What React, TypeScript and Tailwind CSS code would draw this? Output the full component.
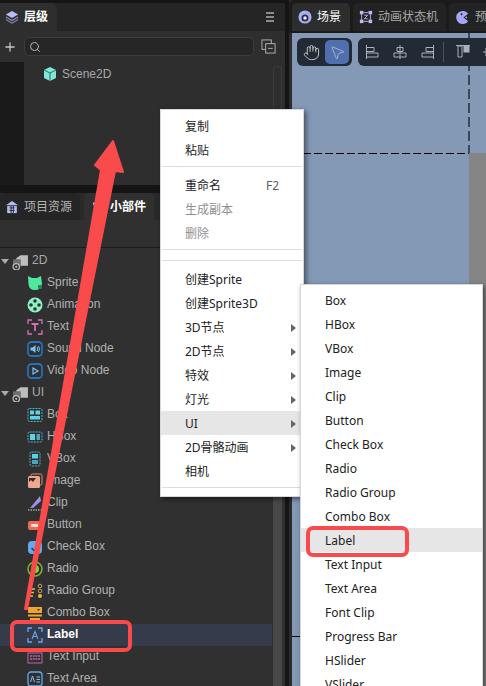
import type { FC, ReactNode } from 'react'
import { Hand, MousePointer2, Plus, Search } from 'lucide-react'

const Svg: FC<{ children: ReactNode; className?: string }> = ({ children, className }) => (
  <svg viewBox="0 0 16 16" className={className ?? 'h-4 w-4 shrink-0'} fill="none">
    {children}
  </svg>
)

const Folder = () => (
  <Svg className="h-[17px] w-[17px] shrink-0">
    <path d="M4 5 L8 2 H15 V12 H8 V6 H4 Z" fill="#bdbdbd" />
    <path d="M1 6 H8 V13 H1 Z" fill="#8a8a8a" opacity="0.7" />
    <circle cx="4" cy="13" r="3" fill="#303030" stroke="#bdbdbd" strokeWidth="1.2" />
    <circle cx="4" cy="13" r="1" fill="#bdbdbd" />
  </Svg>
)

const icons: Record<string, ReactNode> = {
  Sprite: (
    <Svg>
      <path d="M1 1 L5 3 H10 L14 1 L15 9 Q14 15 8 15 Q2 15 1.500 9 Z" fill="#4ee89f" />
      <rect x="11" y="10" width="4" height="4" rx="1" fill="#2e7d5b" />
    </Svg>
  ),
  Animation: (
    <Svg>
      <circle cx="8" cy="8" r="7.500" fill="#8ef2c6" />
      <circle cx="8" cy="4" r="1.800" fill="#303030" />
      <circle cx="8" cy="12" r="1.800" fill="#303030" />
      <circle cx="4" cy="8" r="1.800" fill="#303030" />
      <circle cx="12" cy="8" r="1.800" fill="#303030" />
    </Svg>
  ),
  Text: (
    <Svg>
      <path d="M1 5 V1 H5 M11 1 H15 V5 M15 11 V15 H11 M5 15 H1 V11" stroke="#d56fb4" strokeWidth="1.300" />
      <path d="M4.500 5 H11.500 M8 5 V12" stroke="#d56fb4" strokeWidth="1.800" />
    </Svg>
  ),
  'Sound Node': (
    <Svg>
      <rect x="1" y="1" width="14" height="14" rx="3.500" stroke="#1e88f0" strokeWidth="1.300" />
      <path d="M3.500 6.500 H5.500 L8.500 4 V12 L5.500 9.500 H3.500 Z" fill="#7cc0f5" />
      <path d="M10 6 Q11.500 8 10 10 M11.500 5 Q13.500 8 11.500 11" stroke="#7cc0f5" />
    </Svg>
  ),
  'Video Node': (
    <Svg>
      <rect x="1" y="1" width="14" height="14" rx="3.500" stroke="#1e88f0" strokeWidth="1.300" />
      <path d="M6 5 L11 8 L6 11 Z" stroke="#7cc0f5" strokeWidth="1.200" />
    </Svg>
  ),
  Box: (
    <Svg>
      <rect x="1" y="1.500" width="14" height="13" rx="1.500" stroke="#4fb6c8" strokeDasharray="2 1" />
      <rect x="3" y="3.500" width="4" height="4" fill="#5ed2e8" />
      <rect x="8.500" y="3.500" width="4.500" height="4" fill="#5ed2e8" />
      <rect x="3" y="9" width="10" height="3.500" fill="#5ed2e8" />
    </Svg>
  ),
  HBox: (
    <Svg>
      <rect x="1" y="3" width="14" height="10" rx="1.500" stroke="#4fb6c8" strokeDasharray="2 1" />
      <rect x="3" y="5" width="5" height="6" fill="#5ed2e8" />
      <rect x="9.500" y="5" width="3.500" height="6" fill="#4fa3b8" />
    </Svg>
  ),
  VBox: (
    <Svg>
      <rect x="3" y="1" width="10" height="14" rx="1.500" stroke="#4fb6c8" strokeDasharray="2 1" />
      <rect x="5" y="3" width="6" height="4.500" fill="#5ed2e8" />
      <rect x="5" y="9" width="6" height="4" fill="#4fa3b8" />
    </Svg>
  ),
  Image: (
    <Svg>
      <rect x="4" y="1" width="11" height="11" rx="1.500" stroke="#d9937c" />
      <rect x="1" y="3" width="12" height="12" rx="1.500" fill="#eda68f" />
      <path d="M2 5 H9 L6 9 L4 7 L2 9 Z" fill="#3a2a26" />
    </Svg>
  ),
  Clip: (
    <Svg>
      <path d="M3 13 L13 1 L14 6 L6 13 Z" fill="#a08ee8" />
      <path d="M1 15 H15" stroke="#d8d8d8" strokeDasharray="1.500 1" />
    </Svg>
  ),
  Button: (
    <Svg>
      <rect x="1" y="4" width="15" height="9" rx="2" fill="#ef6a52" />
      <rect x="4" y="7" width="7" height="3" fill="#ffd9cf" />
    </Svg>
  ),
  'Check Box': (
    <Svg>
      <rect x="1" y="2" width="14" height="13" rx="4" fill="#63a9f2" />
      <path d="M4.500 9 L7 11.500 L11 8" stroke="#1e3550" strokeWidth="1.300" />
    </Svg>
  ),
  Radio: (
    <Svg>
      <circle cx="8" cy="8" r="7" stroke="#79b82c" strokeWidth="1.500" />
      <circle cx="8" cy="8" r="4" fill="#8fd52d" />
    </Svg>
  ),
  'Radio Group': (
    <Svg>
      <path d="M1 6 H8 M1 9.500 H7 M1 13 H6" stroke="#eeb54f" strokeWidth="1.600" />
      <circle cx="13" cy="3" r="1.800" stroke="#c9a050" />
      <circle cx="13" cy="8" r="1.800" stroke="#c9a050" />
      <circle cx="13" cy="13" r="2" fill="#eeb54f" />
    </Svg>
  ),
  'Combo Box': (
    <Svg>
      <path d="M1 2 H15 V8 H1 Z" fill="#f0a52f" />
      <path d="M10 4 H13 L11.500 6 Z" fill="#332" />
      <path d="M1 10.500 H15 M3 14 H13" stroke="#f0a52f" strokeWidth="1.800" />
    </Svg>
  ),
  Label: (
    <Svg>
      <path d="M1 5 V1 H5 M11 1 H15 V5 M15 11 V15 H11 M5 15 H1 V11" stroke="#65a8ee" strokeWidth="1.300" />
      <path d="M5 12 L8 4.500 L11 12 M6.200 9.500 H9.800" stroke="#65a8ee" strokeWidth="1.100" />
    </Svg>
  ),
  'Text Input': (
    <Svg>
      <rect x="1" y="4" width="14" height="10" fill="none" stroke="#c065a8" />
      <path d="M3 7 H13 M3 10 H13" stroke="#c065a8" strokeWidth="1.400" strokeDasharray="2 0.700" />
    </Svg>
  ),
  'Text Area': (
    <Svg>
      <rect x="1" y="1" width="14" height="14" rx="3" stroke="#65a8ee" strokeWidth="1.300" />
      <path d="M3.500 11 L5.500 5 L7.500 11 M9.500 6 H13 M9.500 8.500 H13 M9.500 11 H13" stroke="#8cc0f2" />
    </Svg>
  ),
}

const tree = [
  { name: '2D', items: ['Sprite', 'Animation', 'Text', 'Sound Node', 'Video Node'] },
  {
    name: 'UI',
    items: ['Box', 'HBox', 'VBox', 'Image', 'Clip', 'Button', 'Check Box', 'Radio', 'Radio Group', 'Combo Box', 'Label', 'Text Input', 'Text Area'],
  },
]

const Group: FC<{ name: string; items: string[] }> = ({ name, items }) => (
  <>
    <div className="flex h-[22px] items-center">
      <span className="ml-[1px] h-0 w-0 border-x-[4px] border-t-[5px] border-x-transparent border-t-[#aaaaaa]" />
      <span className="ml-[3px]">
        <Folder />
      </span>
      <span className="mb-[2px] ml-[3px] text-[#aaaaaa]">{name}</span>
    </div>
    {items.map((item) => (
      <div
        key={item}
        className={`flex h-[22px] items-center pl-[27px] ${item === 'Label' ? 'w-[272px] bg-[#353b4b] font-bold text-white' : ''}`}
      >
        {icons[item]}
        <span className="mb-[2px] ml-[4px]">{item}</span>
      </div>
    ))}
  </>
)

type Row = { label?: string; sub?: boolean; off?: boolean; hint?: string; active?: boolean; line?: boolean }

const mainMenu: Row[] = [
  { label: '复制' },
  { label: '粘贴' },
  { line: true },
  { label: '重命名', hint: 'F2' },
  { label: '生成副本', off: true },
  { label: '删除', off: true },
  { line: true },
  { line: true },
  { label: '创建Sprite' },
  { label: '创建Sprite3D' },
  { label: '3D节点', sub: true },
  { label: '2D节点', sub: true },
  { label: '特效', sub: true },
  { label: '灯光', sub: true },
  { label: 'UI', sub: true, active: true },
  { label: '2D骨骼动画', sub: true },
  { label: '相机' },
  { line: true },
]

const uiMenu = ['Box', 'HBox', 'VBox', 'Image', 'Clip', 'Button', 'Check Box', 'Radio', 'Radio Group', 'Combo Box', 'Label', 'Text Input', 'Text Area', 'Font Clip', 'Progress Bar', 'HSlider', 'VSlider']

const MenuRow: FC<{ row: Row }> = ({ row }) =>
  row.line ? (
    <div className="px-[1px] pb-[6px] pt-[4px]">
      <div className="h-[1px] bg-[#dcdce0]" />
    </div>
  ) : (
    <div
      className={`flex h-[24px] items-center pl-[24px] pr-[7px] pt-[2px] ${row.active ? 'bg-[#e6e6e6]' : ''} ${row.off ? 'text-[#8f8f8f]' : 'text-[#222222]'}`}
    >
      <span className="flex-1">{row.label}</span>
      {row.hint && <span className="mr-[17px] text-[#555c66]">{row.hint}</span>}
      {row.sub && <span className="h-0 w-0 border-y-[4px] border-l-[5px] border-y-transparent border-l-[#666666]" />}
    </div>
  )

const SceneTab: FC<{ active?: boolean; icon: ReactNode; label: string; className: string }> = ({ active, icon, label, className }) => (
  <div className={`flex h-[28px] shrink-0 items-center gap-[5px] rounded-t-[5px] pl-[6px] ${active ? 'bg-[#2d2d2d] text-white' : 'bg-[#232323] text-[#aaaaaa]'} ${className}`}>
    {icon}
    <span className="whitespace-nowrap">{label}</span>
  </div>
)

const AlignIcon: FC<{ children: ReactNode }> = ({ children }) => (
  <svg viewBox="0 0 16 16" className="h-[16px] w-[16px] shrink-0" fill="none" stroke="#a9b0ba" strokeWidth="1">
    {children}
  </svg>
)

export default function App() {
  return (
    <div
      className="relative flex h-[686px] w-[486px] overflow-hidden bg-[#151515] text-[12px]"
      style={{ fontFamily: '"Liberation Sans", "Noto Sans CJK SC", sans-serif' }}
    >
      {/* left column */}
      <div className="flex w-[289px] shrink-0 flex-col pr-[4px]">
        <div className="mt-[3px] flex h-[182px] flex-col rounded-tr-[5px] bg-[#2e2e2e]">
          <div className="flex h-[28px] items-center bg-[#252525] pr-[11px]">
            <div className="flex h-full w-[57px] items-center gap-[5px] rounded-tr-[5px] bg-[#2e2e2e] pl-[5px] font-bold text-white">
              <Svg className="h-[14px] w-[14px]">
                <path d="M8 1 L15 5 L8 9 L1 5 Z" fill="#b9bcf5" />
                <path d="M1 8 L8 12 L15 8 M1 11 L8 15 L15 11" stroke="#8d90c0" strokeWidth="1.300" />
              </Svg>
              层级
            </div>
            <div className="ml-auto flex w-[8px] flex-col gap-[2px]">
              <span className="h-[2px] bg-[#8a8a8a]" />
              <span className="h-[2px] bg-[#8a8a8a]" />
              <span className="h-[2px] bg-[#8a8a8a]" />
            </div>
          </div>
          <div className="flex h-[31px] items-center pl-[3px] pr-[9px]">
            <Plus className="h-[14px] w-[14px] text-[#c8c8c8]" strokeWidth={2.2} />
            <div className="ml-[7px] flex h-[19px] w-[230px] items-center rounded-[5px] border border-[#3c3c3c] bg-[#262626] pl-[4px]">
              <Search className="h-[12px] w-[12px] text-[#b5b5b5]" />
            </div>
            <Svg className="ml-auto h-[15px] w-[15px]">
              <rect x="1" y="1" width="10" height="10" stroke="#b5b5b5" />
              <rect x="5" y="5" width="10" height="10" fill="#2e2e2e" stroke="#b5b5b5" />
              <path d="M7.500 10 H12.500" stroke="#b5b5b5" />
            </Svg>
          </div>
          <div className="flex min-h-0 flex-1">
            <div className="w-[24px] bg-[#1a1a1a]" />
            <div className="flex h-[22px] flex-1 items-center pl-[18px] pt-[1px] text-[#a8a8a8]">
              <Svg className="h-[16px] w-[16px]">
                <path d="M8 1 L14 4 V12 L8 15 L2 12 V4 Z" fill="#7fe8d8" />
                <path d="M2 4 L8 7 L14 4 M8 7 V15" stroke="#2c6f66" />
              </Svg>
              <span className="ml-[4px]">Scene2D</span>
            </div>
            <div className="mr-[3px] mt-[4px] w-[9px] rounded-t-[5px] border border-b-0 border-[#3d3d3d]" />
          </div>
        </div>

        <div className="mt-[8px] flex min-h-0 flex-1 flex-col rounded-t-[5px] bg-[#303030]">
          <div className="flex h-[27px] gap-[4px] bg-[#2a2a2a] text-[#b5b5b5]">
            <div className="flex w-[80px] items-center gap-[5px] rounded-t-[5px] bg-[#252525] pl-[5px]">
              <Svg className="h-[14px] w-[14px]">
                <path d="M8 1 L15 6 H1 Z" fill="#b9bcf5" />
                <rect x="2.500" y="7" width="11" height="8" fill="#b9bcf5" />
                <path d="M5 9 H11 M5 12 H11 M7 7 V15 M9.500 7 V15" stroke="#252525" />
              </Svg>
              项目资源
            </div>
            <div className="flex w-[70px] items-center gap-[5px] rounded-t-[5px] bg-[#303030] pl-[7px] font-bold text-white">
              <Svg className="h-[14px] w-[14px]">
                <path d="M2 3 L13 1 V8 L8 9 L6 14 L4 9 Z" fill="#b9bcf5" />
              </Svg>
              小部件
            </div>
          </div>
          <div className="h-[28px] border-b border-[#1c1c1c]" />
          <div className="relative flex min-h-0 flex-1">
            <div className="min-w-0 flex-1 overflow-hidden pt-[2px] text-[#b0b0b0]">
              {tree.map((g) => (
                <Group key={g.name} name={g.name} items={g.items} />
              ))}
            </div>
            <div className="mr-[3px] w-[9px] bg-[#484848]" />
          </div>
        </div>
      </div>

      {/* scene column */}
      <div className="flex min-w-0 flex-1 flex-col bg-[#2c2c2c]">
        <div className="flex h-[33px] items-end gap-[3px] overflow-hidden rounded-tl-[5px] bg-[#1b1b1b] pb-[2px] pl-[3px]">
          <SceneTab
            active
            label="场景"
            className="w-[58px]"
            icon={
              <Svg className="h-[14px] w-[14px]">
                <circle cx="8" cy="8" r="7.500" fill="#a9aef0" />
                <circle cx="8" cy="9" r="4" fill="#2a2a4a" />
                <circle cx="8" cy="9" r="2" fill="#e8e8ff" />
              </Svg>
            }
          />
          <SceneTab
            label="动画状态机"
            className="w-[93px]"
            icon={
              <Svg className="h-[14px] w-[14px]">
                <rect x="1" y="1" width="4" height="4" fill="#b9bcf5" />
                <rect x="11" y="1" width="4" height="4" fill="#b9bcf5" />
                <rect x="1" y="11" width="4" height="4" fill="#b9bcf5" />
                <rect x="11" y="11" width="4" height="4" fill="#b9bcf5" />
                <path d="M5 3 H11 M3 5 V11 M5 13 H11 M13 5 V11 M6 6 H10 L6 10 H10" stroke="#b9bcf5" />
              </Svg>
            }
          />
          <SceneTab
            label="预览"
            className="w-[60px]"
            icon={
              <Svg className="h-[15px] w-[15px]">
                <path d="M14 4 A7 7 0 1 0 14 12 L9 8 Z" fill="#a5a9f5" />
                <circle cx="7" cy="4.500" r="1" fill="#222" />
                <circle cx="12" cy="8" r="1" fill="#a5a9f5" />
              </Svg>
            }
          />
        </div>
        <div className="relative ml-[3px] min-h-0 flex-1 overflow-hidden bg-[#8399b5]">
          <div className="absolute bottom-0 left-[177px] right-0 top-[120px] bg-[#858585]" />
          <div className="absolute left-0 top-[120px] h-[1px] w-[177px] bg-[repeating-linear-gradient(90deg,#000000_0_8px,transparent_8px_11px)]" />
          <div className="absolute left-[176px] top-0 h-[120px] w-[2px] bg-[repeating-linear-gradient(180deg,#3c4858_0_10px,transparent_10px_14px)]" />
          <div className="absolute bottom-[49px] left-0 h-[1px] w-[8px] bg-black" />
          <div className="relative flex gap-[6px] pl-[5px] pt-[5px]">
            <div className="flex h-[28px] w-[55px] shrink-0 items-center gap-[5px] rounded-[6px] bg-[#212a35] pl-[6px]">
              <Hand className="h-[17px] w-[17px] shrink-0 text-[#d0d0d0]" strokeWidth={1.3} />
              <div className="flex h-[24px] w-[24px] shrink-0 items-center justify-center rounded-[5px] bg-[#4f6fae]">
                <MousePointer2 className="h-[17px] w-[17px] text-[#aab6cc]" strokeWidth={1.3} />
              </div>
            </div>
            <div className="flex h-[28px] flex-1 items-center gap-[11px] rounded-l-[6px] bg-[#212a35] pl-[7px]">
              <AlignIcon>
                <path d="M1.500 1 V15 M1.500 3.500 H9 V7.500 H1.500 M1.500 9 H13 V13 H1.500" />
              </AlignIcon>
              <AlignIcon>
                <path d="M8 1 V15 M5 3.500 H11 V7.500 H5 Z M2 9 H14 V13 H2 Z" />
              </AlignIcon>
              <AlignIcon>
                <path d="M14.500 1 V15 M14.500 3.500 H7 V7.500 H14.500 M14.500 9 H3 V13 H14.500" />
              </AlignIcon>
              <span className="-ml-[3px] h-[20px] w-[1px] shrink-0 bg-[#4a525e]" />
              <AlignIcon>
                <path d="M1 1.500 H15 M3 2 H7 V13 H3 Z" />
                <rect x="9" y="2" width="5" height="6" fill="#a9b0ba" />
              </AlignIcon>
              <AlignIcon>
                <path d="M1 8 H15 M4 4 H8 V12 H4 Z" />
              </AlignIcon>
            </div>
          </div>
        </div>
      </div>

      {/* context menus */}
      <div
        className="absolute left-[160px] top-[109px] h-[388px] w-[144px] border border-[#d8d8dc] bg-white pt-[4px] shadow-[2px_2px_5px_rgba(0,0,0,0.5)]"
        style={{ fontFamily: '"Noto Sans", "Noto Sans CJK SC", sans-serif' }}
      >
        {mainMenu.map((row, i) => (
          <MenuRow key={i} row={row} />
        ))}
      </div>
      <div
        className="absolute left-[300px] top-[284px] w-[183px] border border-[#d8d8dc] bg-white pt-[3px] shadow-[2px_2px_5px_rgba(0,0,0,0.5)]"
        style={{ fontFamily: '"Noto Sans", "Noto Sans CJK SC", sans-serif' }}
      >
        {uiMenu.map((name) => (
          <div
            key={name}
            className={`flex h-[24px] items-center pl-[24px] pt-[2px] text-[#222222] ${name === 'Label' ? 'bg-[#e6e6e6]' : ''}`}
          >
            {name}
          </div>
        ))}
      </div>

      {/* annotations */}
      <svg className="pointer-events-none absolute left-0 top-0 h-[686px] w-[486px]" viewBox="0 0 486 686" fill="#f94b4b">
        <path
          d="M113 141 L123 172 L115 171 L27 609 L25 609 L101 170 L95 165 Z"
          stroke="#f94b4b"
          strokeWidth="2"
          strokeLinejoin="round"
        />
      </svg>
      <div className="absolute left-[10px] top-[620px] h-[32px] w-[122px] rounded-[7px] border-4 border-[#f94b4b]" />
      <div className="absolute left-[306px] top-[526px] h-[31px] w-[103px] rounded-[7px] border-4 border-[#f94b4b]" />
    </div>
  )
}
